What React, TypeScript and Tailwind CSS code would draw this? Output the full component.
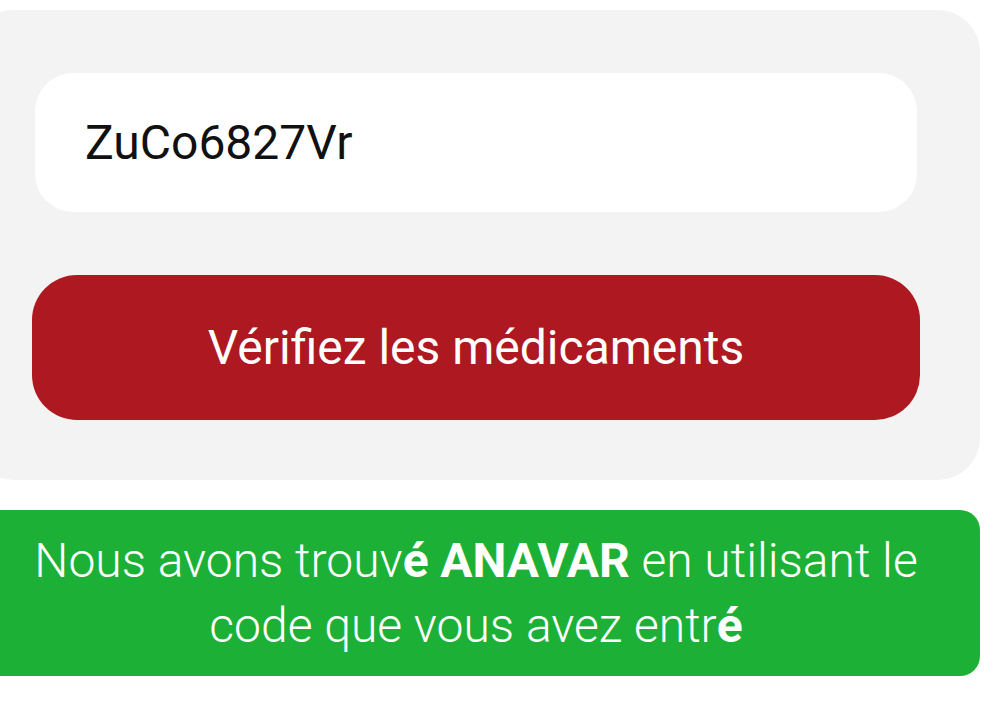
import React from 'react';

export default function App() {
  return (
    <div className="min-h-screen bg-white font-['Roboto',sans-serif] overflow-hidden">
      <div className="-ml-[28px] w-[1008px] pt-[10px]">
        <div className="bg-[#f3f3f3] rounded-[42px] px-[60px] pt-[63px] pb-[60px] flex flex-col gap-[63px]">
          <div className="mx-[3px] h-[139px] bg-white rounded-[38px] flex items-center pl-[50px] text-[48px] text-[#111]">
            ZuCo6827Vr
          </div>
          <button className="h-[145px] w-full bg-[#ae1820] rounded-[45px] flex items-center justify-center text-white text-[48px]">
            Vérifiez les médicaments
          </button>
        </div>
        <div className="mt-[30px] h-[166px] bg-[#1cb136] rounded-r-[20px] flex items-center justify-center px-[50px] text-center text-white text-[48px] leading-[65px] font-light">
          <p>
            Nous avons trouv<b className="font-bold">é</b> <b className="font-bold">ANAVAR</b> en utilisant le code que vous avez entr<b className="font-bold">é</b>
          </p>
        </div>
      </div>
    </div>
  );
}
